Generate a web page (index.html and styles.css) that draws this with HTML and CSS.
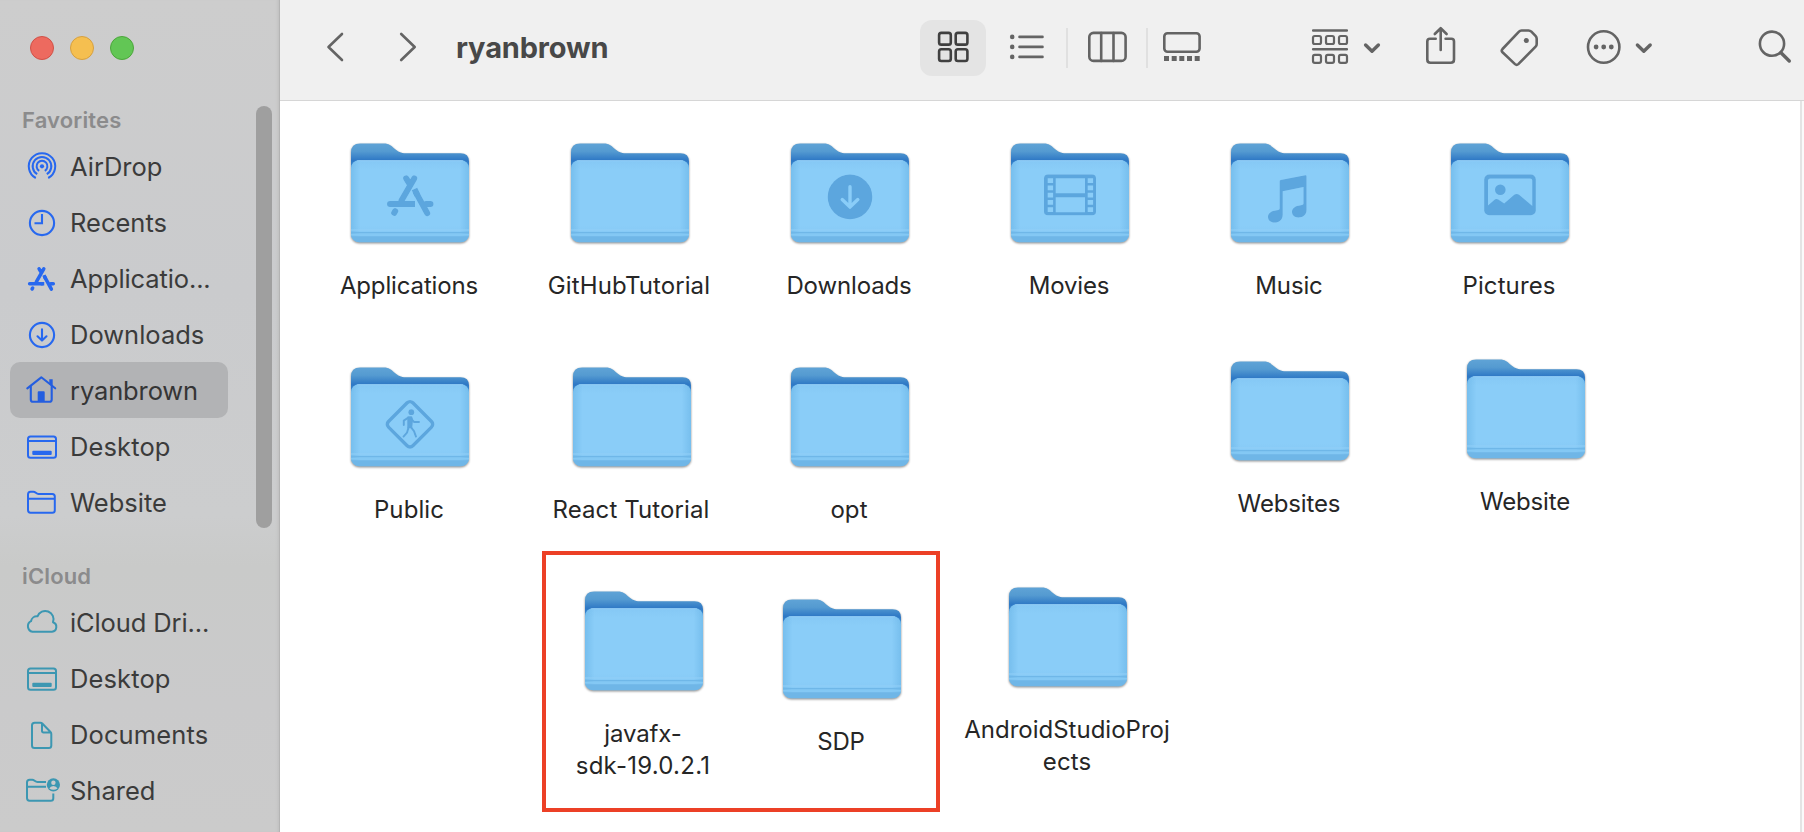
FILE: index.html
```html
<!DOCTYPE html>
<html lang="en">
<head>
<meta charset="utf-8">
<title>ryanbrown</title>
<link rel="stylesheet" href="styles.css">
</head>
<body>
<svg class="defs" width="0" height="0" aria-hidden="true">
  <defs>
    <linearGradient id="back" x1="0" y1="0" x2="0" y2="1">
      <stop offset="0" stop-color="#5fa3d6"/><stop offset=".28" stop-color="#559bd1"/><stop offset=".62" stop-color="#2e78c5"/><stop offset="1" stop-color="#3f8fd2"/>
    </linearGradient>
    <linearGradient id="front" x1="0" y1="0" x2="0" y2="1">
      <stop offset="0" stop-color="#85c8f5"/><stop offset=".12" stop-color="#8acdf8"/><stop offset=".8" stop-color="#8acdf8"/><stop offset="1" stop-color="#80c5f2"/>
    </linearGradient>
    <linearGradient id="sides" x1="0" y1="0" x2="1" y2="0">
      <stop offset="0" stop-color="#5aa9de" stop-opacity=".4"/><stop offset=".08" stop-color="#5aa9de" stop-opacity="0"/>
      <stop offset=".92" stop-color="#5aa9de" stop-opacity="0"/><stop offset="1" stop-color="#5aa9de" stop-opacity=".4"/>
    </linearGradient>
    <clipPath id="body"><rect y="16.6" width="118" height="82" rx="8"/></clipPath>
    <g id="folder">
      <path fill="url(#back)" d="M0 27V9Q0 0 9 0H33C38 0 40 2.2 43 4.6C47.5 8.2 49.5 9.6 55 9.6H109.500Q118 9.600 118 18V27Z"/>
      <rect y="16.6" width="118" height="82" rx="8" fill="url(#front)"/>
      <rect y="16.6" width="118" height="82" rx="8" fill="url(#sides)"/>
      <path d="M6 17.100H112" stroke="#a3d6fa" stroke-width=".9" opacity=".7"/>
      <g clip-path="url(#body)">
        <path d="M0 86.400H118" stroke="#92d0f8" stroke-width="1.200"/>
        <path d="M0 89H118" stroke="#6fb7e8" stroke-width="1.400"/>
        <path d="M0 91.200H118" stroke="#83c8f4" stroke-width="1.600"/>
        <path d="M0 92.600H118V99H0Z" fill="#6fb6e7"/>
      </g>
    </g>
    <g id="appstore" fill="none" stroke="currentColor" stroke-width="6" stroke-linecap="round">
      <path d="M63.200 34.800L50.500 57M55.200 34.800L59 41M39 60.300H60.500M75 60.300H79.500M65 49L76.200 69.500M43.200 69.200L44.200 67.600"/>
      <path stroke-linecap="butt" d="M58 60.300H64M66.500 52L63.500 45.500"/>
    </g>
    <g id="desk" fill="none" stroke="currentColor" stroke-width="2">
      <rect x="-14" y="-9.500" width="28" height="21.300" rx="2.500"/><path d="M-14-5H14"/>
      <rect x="-9.700" y="4.800" width="19.400" height="4.200" rx="1" fill="currentColor" stroke="none"/>
    </g>
  </defs>
</svg>

<div class="window">
  <aside class="sidebar">
    <div class="lights"><span class="light close"></span><span class="light minimize"></span><span class="light zoom"></span></div>
    <h2 class="heading">Favorites</h2>
    <ul class="places favorites">
      <li class="place"><svg class="place-icon" viewBox="-18 -18 36 36"><g fill="none" stroke="currentColor" stroke-width="2"><path d="M-6.200 12A13.200 13.200 0 1 1 6.200 12"/><path d="M-4.800 8.200A9.300 9.300 0 1 1 4.800 8.200"/><path d="M-2.800 4.800A5.400 5.400 0 1 1 2.800 4.800"/></g><circle cy=".3" r="2.100" fill="currentColor"/></svg><span>AirDrop</span></li>
      <li class="place"><svg class="place-icon" viewBox="-18 -18 36 36"><g fill="none" stroke="currentColor" stroke-width="2.100"><circle cy="1" r="12.100"/><path d="M0-8V1.300H-7.500"/></g></svg><span>Recents</span></li>
      <li class="place snug"><svg class="place-icon" viewBox="-18 -18 36 36"><use href="#appstore" transform="translate(-35.200 -29.500) scale(.585)"/></svg><span>Applicatio...</span></li>
      <li class="place"><svg class="place-icon" viewBox="-18 -18 36 36"><g fill="none" stroke="currentColor" stroke-width="2.100" stroke-linecap="round" stroke-linejoin="round"><circle cy="1" r="12.100"/><path d="M0-4.600V6.300M-4.500 2.300L0 6.600L4.500 2.300"/></g></svg><span>Downloads</span></li>
      <li class="place selected snug"><svg class="place-icon" viewBox="-18 -18 36 36"><g fill="none" stroke="currentColor" stroke-width="2.100" stroke-linecap="round" stroke-linejoin="round"><path d="M-14.700-1.700L-.7-12.700L13.200-1.700"/><path d="M-11.200-3.500V9.500Q-11.200 11.800-9 11.800H7.500Q9.700 11.800 9.700 9.500V-3.500"/></g><path d="M-4.300 12V2.300Q-4.300 1.300-3.300 1.300H1.700Q2.700 1.300 2.700 2.300V12ZM7.300-10.700H10.700V-3L7.300-6Z" fill="currentColor"/></svg><span>ryanbrown</span></li>
      <li class="place airy"><svg class="place-icon" viewBox="-18 -18 36 36"><use href="#desk"/></svg><span>Desktop</span></li>
      <li class="place"><svg class="place-icon" viewBox="-18 -18 36 36"><path fill="none" stroke="currentColor" stroke-width="2" d="M-14-3.200H12.800M-14 8V-7.500Q-14-10.300-11.500-10.300H-8.500C-6.500-10.300-5.800-8-3.500-8H10.300Q12.800-8 12.800-5.500V8.200Q12.800 10.700 10.300 10.700H-11.500Q-14 10.700-14 8Z"/></svg><span>Website</span></li>
    </ul>
    <h2 class="heading">iCloud</h2>
    <ul class="places icloud">
      <li class="place snug"><svg class="place-icon" viewBox="-18 -18 36 36"><path fill="none" stroke="currentColor" stroke-width="2" stroke-linejoin="round" d="M-9.500 9.700A5.600 5.600 0 0 1-11-.8A6 6 0 0 1-4.500-5.700A8.200 8.200 0 0 1 11 .2A4.900 4.900 0 0 1 10 9.700Z"/></svg><span>iCloud Dri...</span></li>
      <li class="place airy"><svg class="place-icon" viewBox="-18 -18 36 36"><use href="#desk"/></svg><span>Desktop</span></li>
      <li class="place airy"><svg class="place-icon" viewBox="-18 -18 36 36"><path fill="none" stroke="currentColor" stroke-width="2" stroke-linejoin="round" d="M-7.300-11.300H-1.500Q-.5-11.300.3-10.500L8.500-2Q9.300-1.200 9.300 0V11.500Q9.300 14 6.800 14H-7.500Q-10 14-10 11.500V-8.700Q-10-11.300-7.300-11.300ZM0-11V-3Q0-1.600 1.500-1.600H9"/></svg><span>Documents</span></li>
      <li class="place"><svg class="place-icon" viewBox="-18 -18 36 36"><g fill="none" stroke="currentColor" stroke-width="2"><path d="M4-8H-4.500C-7-8-7.700-10.300-9.700-10.300H-12.300Q-15-10.300-15-7.700V8Q-15 10.700-12.500 10.700H8.800Q11.300 10.700 11.300 8.200V3.500M-15-3.200H4"/></g><circle cx="11.400" cy="-5.200" r="6.600" fill="currentColor"/><circle cx="11.400" cy="-7.300" r="2.200" fill="#cbcbcc"/><path d="M7.300-1.500Q8.300-4 11.400-4T15.500-1.500Q13.500-.2 11.400-.2T7.300-1.500Z" fill="#cbcbcc"/></svg><span>Shared</span></li>
    </ul>
    <div class="scrollbar"></div>
  </aside>

  <main class="main">
    <header class="toolbar">
      <div class="nav">
        <svg class="tool" width="30" height="56" viewBox="320 20 30 56"><path d="M342 34L328.500 47L342 60"/></svg>
        <svg class="tool" width="30" height="56" viewBox="390 20 30 56"><path d="M401.200 34L414.700 47L401.200 60"/></svg>
        <h1 class="title">ryanbrown</h1>
      </div>
      <div class="views">
        <svg class="tool active" width="66" height="56" viewBox="920 20 66 56"><rect x="939.100" y="32.900" width="11.700" height="11.700" rx="2.200"/><rect x="955.700" y="32.900" width="11.700" height="11.700" rx="2.200"/><rect x="939.100" y="49.300" width="11.700" height="11.700" rx="2.200"/><rect x="955.700" y="49.300" width="11.700" height="11.700" rx="2.200"/></svg>
        <svg class="tool list" width="46" height="56" viewBox="1004 20 46 56"><path d="M1019.500 36.900H1042.500M1019.500 46.900H1042.500M1019.500 56.900H1042.500"/><g class="solid"><circle cx="1012.200" cy="36.900" r="2.300"/><circle cx="1012.200" cy="46.900" r="2.300"/><circle cx="1012.200" cy="56.900" r="2.300"/></g></svg>
        <span class="divider"></span>
        <svg class="tool" width="46" height="56" viewBox="1084 20 46 56"><rect x="1089.300" y="32.900" width="36.300" height="28" rx="4.200"/><path d="M1101.200 33V61M1113.500 33V61"/></svg>
        <span class="divider"></span>
        <svg class="tool" width="44" height="56" viewBox="1160 20 44 56"><rect x="1164.300" y="33.200" width="35.300" height="18.600" rx="3.200"/><path class="solid" d="M1164 56h5v5h-5zM1171.700 56h5v5h-5zM1179.300 56h5v5h-5zM1187 56h5v5h-5zM1194.700 56h5v5h-5z"/></svg>
      </div>
      <svg class="tool group" width="76" height="56" viewBox="1308 20 76 56"><path d="M1313.200 30.500H1346.800M1313.200 49.300H1346.800"/><g class="cells"><rect x="1313" y="36" width="8" height="8" rx="1.800"/><rect x="1326" y="36" width="8" height="8" rx="1.800"/><rect x="1339" y="36" width="8" height="8" rx="1.800"/><rect x="1313" y="54.900" width="8" height="8" rx="1.800"/><rect x="1326" y="54.900" width="8" height="8" rx="1.800"/><rect x="1339" y="54.900" width="8" height="8" rx="1.800"/></g><path class="chevron" d="M1365.600 45L1372 51.300L1378.400 45"/></svg>
      <svg class="tool share" width="38" height="56" viewBox="1422 20 38 56"><path d="M1435.700 38.800H1430Q1427.300 38.800 1427.300 41.500V59.500Q1427.300 62.800 1430.500 62.800H1450.700Q1454 62.800 1454 59.500V41.500Q1454 38.800 1451.300 38.800H1445.600M1440.700 50V28.500M1434.800 34L1440.700 28.200L1446.600 34"/></svg>
      <svg class="tool tag" width="46" height="56" viewBox="1496 20 46 56"><path d="M1521.500 30.500H1528.500Q1530.200 30.500 1531.400 31.700L1535.500 35.800Q1536.700 37 1536.700 38.700V44Q1536.700 45.500 1535.600 46.600L1518.300 64.100Q1516.700 65.600 1515 64.100L1502.500 52.300Q1501 50.700 1502.500 49L1519 31.700Q1520 30.500 1521.500 30.500Z"/><circle class="solid" cx="1526.300" cy="40.500" r="2.500"/></svg>
      <svg class="tool more" width="72" height="56" viewBox="1584 20 72 56"><circle cx="1603.700" cy="47" r="15.700"/><g class="solid"><circle cx="1596.100" cy="47" r="2.400"/><circle cx="1603.700" cy="47" r="2.400"/><circle cx="1611.300" cy="47" r="2.400"/></g><path class="chevron" d="M1637.400 45L1643.800 51.300L1650.200 45"/></svg>
      <svg class="tool search" width="38" height="56" viewBox="1756 20 38 56"><circle cx="1772" cy="43.700" r="12.100"/><path class="chevron" d="M1781 52.700L1789.300 61"/></svg>
    </header>

    <section class="desk">
      <div class="item p-applications"><svg class="folder" viewBox="-6 -1.600 130 110"><use href="#folder"/><g class="emblem"><use href="#appstore"/></g></svg><div class="label">Applications</div></div>
      <div class="item p-github"><svg class="folder" viewBox="-6 -1.600 130 110"><use href="#folder"/></svg><div class="label loose">GitHubTutorial</div></div>
      <div class="item p-downloads"><svg class="folder" viewBox="-6 -1.600 130 110"><use href="#folder"/><g class="emblem"><circle cx="59" cy="53.300" r="22.300" fill="currentColor"/><path d="M59 43.200V62.500M51.200 56L59 63.500L66.800 56" fill="none" stroke="#8acdf8" stroke-width="3.400" stroke-linecap="round" stroke-linejoin="round"/></g></svg><div class="label">Downloads</div></div>
      <div class="item p-movies"><svg class="folder" viewBox="-6 -1.600 130 110"><use href="#folder"/><g class="emblem"><rect x="33" y="31" width="52" height="40.700" rx="3.800" fill="currentColor"/><path fill="#8acdf8" d="M44.700 34.700h29.300v15h-29.300zM44.700 53.700h29.300v15h-29.300z"/><path stroke="#8acdf8" stroke-width="5.400" stroke-dasharray="4.700 2.550" d="M39.400 34.700V68.600M79.400 34.700V68.600"/></g></svg><div class="label">Movies</div></div>
      <div class="item p-music"><svg class="folder" viewBox="-6 -1.600 130 110"><use href="#folder"/><g class="emblem"><path fill="currentColor" d="M48.700 37.700Q48.700 36.700 49.700 36.500L74.300 31.700Q75.500 31.500 75.500 32.700V66.500C75.500 71.500 71.800 73.900 67.300 73.900C63.300 73.900 61 71.500 61 68.500C61 65 63.500 63 67.500 62.200L71 61.500Q72.500 61.200 72.500 59.800V43.500L51.700 47.700V71C51.700 76.500 48 79 43.500 79C39.500 79 37 76.500 37 73.500C37 70 39.500 68 43.500 67.200L47.200 66.500Q48.700 66.200 48.700 64.700Z"/></g></svg><div class="label">Music</div></div>
      <div class="item p-pictures"><svg class="folder" viewBox="-6 -1.600 130 110"><use href="#folder"/><g class="emblem"><rect x="33.200" y="31" width="51.600" height="40.700" rx="5" fill="currentColor"/><path fill="#8acdf8" d="M37 37Q37 34.800 39.200 34.800H79.200Q81.300 34.800 81.300 37V62.500L68 51.200Q65.700 49.500 63.300 51.200L53.200 60L47.200 56Q45.200 54.800 43.300 56.300L37 62Z"/><circle cx="49.300" cy="46.200" r="5.300" fill="currentColor"/></g></svg><div class="label loose">Pictures</div></div>
      <div class="item p-public"><svg class="folder" viewBox="-6 -1.600 130 110"><use href="#folder"/><g class="emblem"><rect x="41.800" y="39.500" width="34.400" height="34.400" rx="4" transform="rotate(45 59 56.700)" fill="none" stroke="currentColor" stroke-width="3.500"/><circle cx="60.300" cy="44.600" r="2.900" fill="currentColor"/><path fill="none" stroke="currentColor" stroke-width="2" stroke-linecap="round" stroke-linejoin="round" d="M56.500 50.500L52.800 53V57.500M60.500 51.500L63.200 54.500H68M57.500 60L56 65L52.500 69M59.500 59L63 63.500L65 69"/><path fill="currentColor" stroke="currentColor" stroke-width="1.500" stroke-linejoin="round" d="M57 49.500L60.500 49.500L61.300 52L60.500 60L57 60Z"/></g></svg><div class="label loose">Public</div></div>
      <div class="item p-react"><svg class="folder" viewBox="-6 -1.600 130 110"><use href="#folder"/></svg><div class="label loose">React Tutorial</div></div>
      <div class="item p-opt"><svg class="folder" viewBox="-6 -1.600 130 110"><use href="#folder"/></svg><div class="label loose">opt</div></div>
      <div class="item p-websites"><svg class="folder" viewBox="-6 -1.600 130 110"><use href="#folder"/></svg><div class="label">Websites</div></div>
      <div class="item p-website"><svg class="folder" viewBox="-6 -1.600 130 110"><use href="#folder"/></svg><div class="label">Website</div></div>
      <div class="item p-javafx"><svg class="folder" viewBox="-6 -1.600 130 110"><use href="#folder"/></svg><div class="label">javafx-</div><div class="label wide next">sdk-19.0.2.1</div></div>
      <div class="item p-sdp"><svg class="folder" viewBox="-6 -1.600 130 110"><use href="#folder"/></svg><div class="label">SDP</div></div>
      <div class="item p-android"><svg class="folder" viewBox="-6 -1.600 130 110"><use href="#folder"/></svg><div class="label even">AndroidStudioProj</div><div class="label loose next">ects</div></div>
      <div class="highlight"></div>
    </section>
  </main>
</div>
</body>
</html>
```
FILE: styles.css
```css
* { box-sizing: border-box; }

body {
  margin: 0;
  font-family: Inter, "Liberation Sans", sans-serif;
  background: #fff;
  overflow: hidden;
}

.defs { position: absolute; }

.window {
  display: flex;
  width: 1804px;
  height: 832px;
}

/* Sidebar */
.sidebar {
  position: relative;
  flex: none;
  width: 280px;
  padding-top: 36px;
  background: linear-gradient(#cdcdcd, #cacbcd 35%, #cccdce 62%, #c9cac9 68%, #cacacb 85%, #cbcbcb);
  box-shadow: inset -1px 0 #b4b4b4, inset -4px 0 3px -2px #bebebe;
}

.lights {
  display: flex;
  gap: 16px;
  height: 24px;
  padding-left: 30px;
}

.light {
  width: 24px;
  height: 24px;
  border: 1px solid;
  border-radius: 50%;
}

.close { background: #ed6a5f; border-color: #d05147; }
.minimize { background: #f5bf50; border-color: #d6a040; }
.zoom { background: #62c655; border-color: #4ca63b; }

.heading {
  margin: 0;
  padding-left: 22px;
  font-size: 22px;
  font-weight: 600;
  line-height: 36px;
  letter-spacing: .15px;
  color: #8b8b8c;
}

.lights + .heading { margin-top: 42px; }
.places + .heading { margin-top: 28px; }

.places {
  margin: 0;
  padding: 0 52px 0 10px;
  list-style: none;
}

.place {
  display: flex;
  align-items: center;
  gap: 10px;
  height: 56px;
  padding-left: 14px;
  border-radius: 10px;
  font-size: 25.500px;
  color: #3b3b3b;
  white-space: nowrap;
}

.snug { letter-spacing: -.12px; }
.airy { letter-spacing: .12px; }

.selected { background: #b2b3b5; color: #353535; }

.place-icon {
  flex: none;
  width: 36px;
  height: 36px;
  overflow: visible;
}

.favorites .place-icon { color: #2768ef; }
.favorites .selected .place-icon { color: #245ee0; }
.icloud .place-icon { color: #3c97b2; }

.scrollbar {
  position: absolute;
  top: 106px;
  right: 8px;
  width: 16px;
  height: 422px;
  border-radius: 8px;
  background: #9f9f9f;
}

/* Toolbar */
.main {
  display: flex;
  flex: 1;
  flex-direction: column;
}

.toolbar {
  display: flex;
  align-items: center;
  height: 101px;
  padding-bottom: 4px;
  border-bottom: 1px solid #d6d6d6;
  background: #f0f0f0;
}

.nav {
  display: flex;
  align-items: center;
  gap: 40px;
  width: 640px;
  padding-left: 40px;
}

.title {
  margin: 0 0 0 -4px;
  font-size: 29px;
  font-weight: 700;
  line-height: 40px;
  letter-spacing: -.15px;
  color: #484848;
}

.tool {
  flex: none;
  color: #646464;
  fill: none;
  stroke: currentColor;
  stroke-width: 2.600px;
  stroke-linecap: round;
  stroke-linejoin: round;
}

.solid { fill: currentColor; stroke: none; }
.cells { stroke-width: 2.200px; }
.chevron { stroke-width: 3.400px; }

.views {
  display: flex;
  align-items: center;
}

.active {
  border-radius: 12px;
  background: #e4e4e4;
  color: #404040;
}

.list { margin-left: 18px; }

.divider {
  width: 2px;
  height: 40px;
  margin: 0 16px;
  background: #e0e0e0;
}

.divider + .tool:last-child { margin-left: -4px; }

.group { margin-left: 104px; }
.share { margin-left: 38px; }
.tag { margin-left: 36px; }
.more { margin-left: 42px; }
.search { margin-left: 100px; }

/* Icon view: folders are placed freely */
.desk {
  position: relative;
  flex: 1;
  border-right: 2px solid #fafafa;
  box-shadow: inset -2px 0 #e4e4e4;
}

.item {
  position: absolute;
  display: flex;
  flex-direction: column;
  align-items: center;
  width: 220px;
}

.folder {
  width: 130px;
  height: 110px;
  filter: drop-shadow(0 1.500px 1.200px rgba(0, 0, 0, .45));
}

.emblem {
  color: #5ca6de;
  filter: drop-shadow(0 .8px .4px rgba(165, 218, 252, .8));
}

.label {
  margin-top: 18px;
  padding-right: 2px;
  font-size: 24px;
  line-height: 32px;
  letter-spacing: -.14px;
  color: #262626;
  white-space: nowrap;
}

.next { margin-top: 0; }
.even { letter-spacing: 0; }
.loose { letter-spacing: .1px; }
.wide { letter-spacing: .25px; }

.p-applications { left: 20px; top: 41px; }
.p-github { left: 240px; top: 41px; }
.p-downloads { left: 460px; top: 41px; }
.p-movies { left: 680px; top: 41px; }
.p-music { left: 900px; top: 41px; }
.p-pictures { left: 1120px; top: 41px; }
.p-public { left: 20px; top: 265px; }
.p-react { left: 242px; top: 265px; }
.p-opt { left: 460px; top: 265px; }
.p-websites { left: 900px; top: 259px; }
.p-website { left: 1136px; top: 257px; }
.p-javafx { left: 254px; top: 489px; }
.p-sdp { left: 452px; top: 497px; }
.p-android { left: 678px; top: 485px; }

.highlight {
  position: absolute;
  left: 262px;
  top: 450px;
  width: 398px;
  height: 261px;
  border: 4px solid #ec4026;
}
```
